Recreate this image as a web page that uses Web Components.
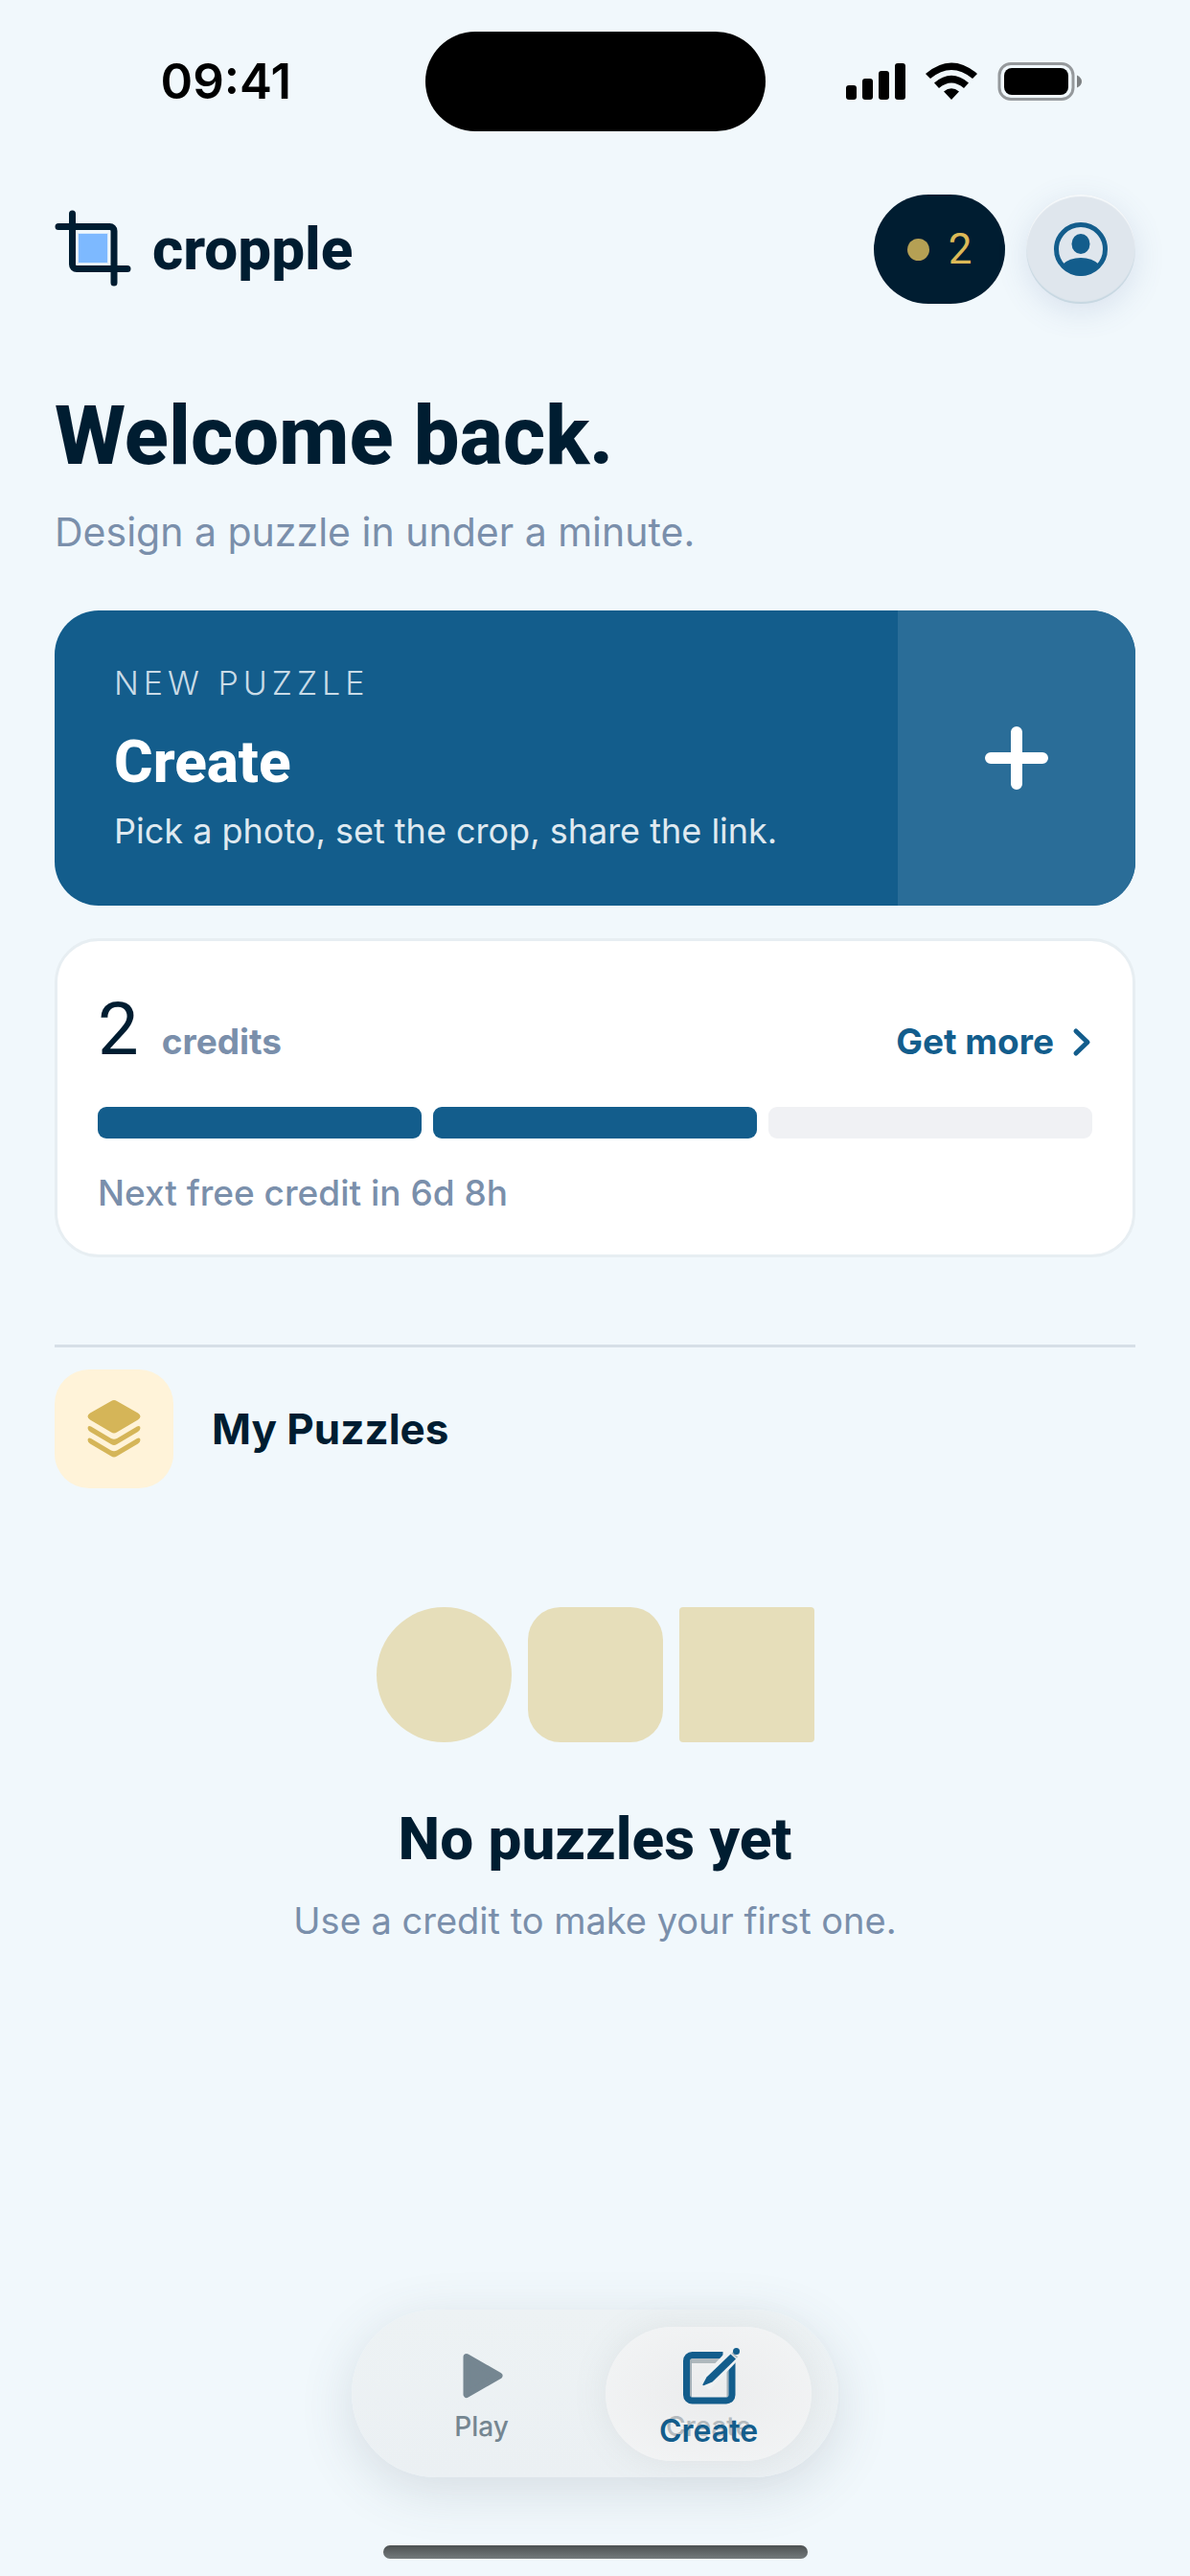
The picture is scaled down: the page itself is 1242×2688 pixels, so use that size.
<!DOCTYPE html>
<html lang="en">
<head>
<meta charset="utf-8">
<meta name="viewport" content="width=device-width, initial-scale=1">
<title>cropple</title>
<style>
  :root {
    --bg: #f1f8fc;
    --ink: #001d31;
    --blue: #135d8c;
    --muted: #7a8fab;
    --gold: #d5b558;
    --display: Roboto, "Liberation Sans", sans-serif;
    --text: Inter, "Liberation Sans", sans-serif;
  }

  body {
    margin: 0;
    background: var(--bg);
    color: var(--ink);
    font-family: var(--text);
  }
</style>
</head>
<body>
<home-screen></home-screen>

<script>
const define = (name, html) => {
  const template = document.createElement('template');
  template.innerHTML = html;
  customElements.define(name, class extends HTMLElement {
    constructor() {
      super();
      this.attachShadow({ mode: 'open' }).appendChild(template.content.cloneNode(true));
    }
  });
};

define('status-bar', `
  <style>
    :host {
      display: grid;
      grid-template-columns: 1fr 355px 1fr;
      align-items: center;
      padding-top: 33px;
    }
    time {
      justify-self: center;
      padding-left: 28px;
      font-size: 51px;
      font-weight: 600;
      line-height: 64px;
      color: #000;
    }
    .island {
      height: 104px;
      border-radius: 52px;
      background: #000;
    }
    svg {
      justify-self: center;
      margin-right: 28px;
    }
  </style>
  <time>09:41</time>
  <div class="island"></div>
  <svg width="248" height="40" viewBox="0 0 248 40" aria-hidden="true">
    <rect x="1" y="24" width="11" height="15" rx="3"/>
    <rect x="18" y="17" width="11" height="22" rx="3"/>
    <rect x="35" y="9" width="11" height="30" rx="3"/>
    <rect x="52" y="1" width="11" height="38" rx="3"/>
    <path d="M84 12Q111-11 138 12L133 17Q111-1 89 17Z"/>
    <path d="M93 21.500Q111 6 129 21.500L124 27Q111 16 98 27Z"/>
    <path d="M103 30.500Q111 24 119 30.500L111 39Z"/>
    <rect x="161" y="1.500" width="77" height="37" rx="12" fill="none" stroke="#95999c" stroke-width="3"/>
    <rect x="166" y="6" width="67" height="28" rx="8"/>
    <path d="M242 13.500Q247 16 247 20T242 26.500Z" fill="#7d8183"/>
  </svg>
`);

define('app-header', `
  <style>
    :host {
      display: flex;
      align-items: center;
      gap: 22px;
      height: 114px;
    }
    a {
      display: flex;
      align-items: center;
      gap: 20px;
      margin-right: auto;
      color: inherit;
      text-decoration: none;
      font: 800 62px/72px var(--display);
    }
    button {
      display: flex;
      align-items: center;
      justify-content: center;
      height: 114px;
      padding: 0;
      border: 0;
      border-radius: 57px;
    }
    .credits {
      gap: 20px;
      width: 137px;
      background: var(--ink);
      color: #dcb957;
      font: 400 44px/52px var(--display);
    }
    .credits i {
      width: 23px;
      height: 23px;
      border-radius: 50%;
      background: #b5a054;
    }
    .profile {
      width: 114px;
      background: #dfe6ed;
      color: var(--blue);
      box-shadow: inset 0 2px 1px #f6f9fb, inset 0 -2px 1px #c6d7e1, 0 8px 32px rgba(90, 110, 160, .16);
    }
  </style>
  <a href="#" aria-label="cropple">
    <svg width="82" height="82" viewBox="0 0 82 82" aria-hidden="true">
      <rect x="24.500" y="24.500" width="31" height="31" fill="#7db9ff" stroke="#d9ebfd"/>
      <path d="M18.500 4v53a4.500 4.500 0 0 0 4.500 4.500h53M4 17.500h53.500a4.500 4.500 0 0 1 4.500 4.500v54" fill="none" stroke="#001d31" stroke-width="7" stroke-linecap="round"/>
    </svg>
    <span>cropple</span>
  </a>
  <button class="credits"><i></i><span>2</span></button>
  <button class="profile" aria-label="Profile">
    <svg width="58" height="58" viewBox="0 0 58 58" aria-hidden="true">
      <circle cx="29" cy="29" r="25.500" fill="none" stroke="currentColor" stroke-width="5"/>
      <ellipse cx="29" cy="23.500" rx="9.500" ry="10.500" fill="currentColor"/>
      <path d="M10 45Q17 38 29 38T48 45Q41 57 29 57T10 45Z" fill="currentColor"/>
    </svg>
  </button>
`);

define('welcome-title', `
  <style>
    :host {
      display: block;
    }
    h1 {
      margin: 0 0 22px;
      font: 800 85px/100px var(--display);
    }
    p {
      margin: 0;
      font-size: 41px;
      line-height: 56px;
      color: var(--muted);
    }
  </style>
  <h1><slot></slot></h1>
  <p><slot name="hint"></slot></p>
`);

define('create-card', `
  <style>
    :host {
      display: block;
    }
    button {
      display: grid;
      grid-template-columns: 1fr 248px;
      width: 100%;
      padding: 0;
      border: 0;
      border-radius: 46px;
      overflow: hidden;
      background: var(--blue);
      color: #fff;
      font-family: inherit;
      text-align: left;
    }
    .copy {
      display: flex;
      flex-direction: column;
      padding: 54px 62px 56px;
    }
    small {
      font-size: 34px;
      font-weight: 300;
      line-height: 44px;
      letter-spacing: 5px;
      text-transform: uppercase;
      color: #c9dbe7;
    }
    b {
      margin: 24px 0 14px;
      font: 800 62px/72px var(--display);
    }
    .hint {
      font-size: 36px;
      line-height: 44px;
      color: #dfe9f0;
    }
    .plus {
      display: grid;
      place-items: center;
      background: #2a6d98;
    }
  </style>
  <button>
    <span class="copy">
      <small>New puzzle</small>
      <b>Create</b>
      <span class="hint">Pick a photo, set the crop, share the link.</span>
    </span>
    <span class="plus">
      <svg width="68" height="68" viewBox="0 0 68 68" aria-hidden="true">
        <path d="M34 7v54M7 34h54" stroke="#fff" stroke-width="12" stroke-linecap="round"/>
      </svg>
    </span>
  </button>
`);

define('credits-card', `
  <style>
    :host {
      display: block;
      padding: 48px 42px 42px;
      border: 3px solid #e7eef2;
      border-radius: 46px;
      background: #fff;
    }
    .row {
      display: flex;
      align-items: baseline;
      gap: 24px;
    }
    .count {
      font: 400 76px/88px var(--display);
    }
    .label {
      font-size: 37px;
      font-weight: 700;
      color: var(--muted);
    }
    a {
      display: flex;
      align-items: center;
      gap: 18px;
      margin-left: auto;
      font-size: 37px;
      font-weight: 700;
      line-height: 44px;
      color: var(--blue);
      text-decoration: none;
    }
    .meter {
      display: grid;
      grid-template-columns: repeat(3, 1fr);
      gap: 12px;
      margin: 37px 0 35px;
    }
    .meter i {
      height: 33px;
      border-radius: 9px;
      background: #f0f1f4;
    }
    .meter .on {
      background: var(--blue);
    }
    p {
      margin: 0;
      font-size: 37px;
      font-weight: 500;
      line-height: 44px;
      color: var(--muted);
    }
  </style>
  <div class="row">
    <span class="count">2</span>
    <span class="label">credits</span>
    <a href="#">Get more
      <svg width="22" height="32" viewBox="0 0 22 32" aria-hidden="true">
        <path d="M5 5l12 11.500L5 28" fill="none" stroke="currentColor" stroke-width="5" stroke-linecap="round" stroke-linejoin="round"/>
      </svg>
    </a>
  </div>
  <div class="meter"><i class="on"></i><i class="on"></i><i></i></div>
  <p>Next free credit in 6d 8h</p>
`);

define('section-title', `
  <style>
    :host {
      display: flex;
      align-items: center;
      gap: 40px;
      padding-top: 23px;
      border-top: 3px solid #d6dfe7;
    }
    .tile {
      display: grid;
      place-items: center;
      width: 124px;
      height: 124px;
      border-radius: 36px;
      background: #fff3d9;
    }
    h2 {
      margin: 0;
      font-size: 44px;
      font-weight: 700;
      line-height: 56px;
    }
  </style>
  <div class="tile">
    <svg width="56" height="62" viewBox="0 0 56 62" fill="#d5b558" aria-hidden="true">
      <path d="M25 2Q28 0 31 2L53 14.500Q58 18 53 21.500L31 34.500Q28 36.500 25 34.500L3 21.500Q-2 18 3 14.500Z"/>
      <path d="M1 28.500Q2 27.500 4 28.500L25 41Q28 42.500 31 41L52 28.500Q54 27.500 55 28.500Q56.500 31.500 53 34L31 47Q28 49 25 47L3 34Q-.500 31.500 1 28.500Z"/>
      <path d="M1 41Q2 40 4 41L25 53.500Q28 55 31 53.500L52 41Q54 40 55 41Q56.500 44 53 46.500L31 59.500Q28 61.500 25 59.500L3 46.500Q-.500 44 1 41Z"/>
    </svg>
  </div>
  <h2><slot></slot></h2>
`);

define('empty-state', `
  <style>
    :host {
      display: block;
      text-align: center;
    }
    .shapes {
      display: flex;
      justify-content: center;
      gap: 17px;
    }
    i {
      width: 141px;
      height: 141px;
      border-radius: 4px;
      background: #e6deba;
    }
    .circle {
      border-radius: 50%;
    }
    .soft {
      border-radius: 34px;
    }
    h3 {
      margin: 65px 0 25px;
      font: 800 62px/72px var(--display);
    }
    p {
      margin: 0;
      font-size: 38px;
      line-height: 48px;
      color: var(--muted);
    }
  </style>
  <div class="shapes"><i class="circle"></i><i class="soft"></i><i></i></div>
  <h3><slot></slot></h3>
  <p><slot name="hint"></slot></p>
`);

define('tab-bar', `
  <style>
    :host {
      display: flex;
      gap: 22px;
      padding: 18px 28px 17px;
      border-radius: 88px;
      background: linear-gradient(#edf2f4, #ebf0f3);
      box-shadow: 0 14px 56px rgba(70, 80, 95, .16);
    }
    button {
      position: relative;
      display: flex;
      flex-direction: column;
      align-items: center;
      gap: 4px;
      width: 215px;
      height: 140px;
      padding: 19px 0 0;
      border: 0;
      border-radius: 70px;
      background: none;
      font: 500 28px/34px var(--text);
      color: #758691;
    }
    .active {
      background: radial-gradient(#ebeced, #f3f5f6);
      box-shadow: 0 0 36px rgba(120, 130, 130, .12);
      color: var(--blue);
      font: 600 32px/44px var(--text);
    }
    /* label of the resting state, fading out under the active one */
    .ghost {
      position: absolute;
      top: 87px;
      font: 500 28px/34px var(--text);
      color: #b4babe;
    }
    .label {
      position: relative;
    }
  </style>
  <button>
    <svg width="64" height="64" viewBox="0 0 64 64" aria-hidden="true">
      <path d="M16 12.500l34 19.500-34 19.500z" fill="currentColor" stroke="currentColor" stroke-width="7" stroke-linejoin="round"/>
    </svg>
    <span>Play</span>
  </button>
  <button class="active">
    <svg width="64" height="64" viewBox="0 0 64 64" fill="none" aria-hidden="true">
      <path d="M12 16.500h34" stroke="#afb8bd" stroke-width="5"/>
      <path d="M13 16v38M51.500 24v30" stroke="#a3b0b8" stroke-width="2"/>
      <path d="M46.500 10.500H14.500a6 6 0 0 0-6 6V52a6 6 0 0 0 6 6H50a6 6 0 0 0 6-6V17" stroke="currentColor" stroke-width="7"/>
      <path d="M27 42L63 4" stroke="#eff1f2" stroke-width="15"/>
      <path d="M54.500 9.500L60 14.500 35.500 38.500 27 42Q25 42.500 25.500 41L29.500 33.500Z" fill="currentColor"/>
      <path d="M56 8L61.500 13" stroke="#b4bec4" stroke-width="2"/>
      <circle cx="60.500" cy="6.500" r="3.500" fill="currentColor"/>
    </svg>
    <span class="ghost" aria-hidden="true">Create</span>
    <span class="label">Create</span>
  </button>
`);

define('home-screen', `
  <style>
    :host {
      display: flex;
      flex-direction: column;
      box-sizing: border-box;
      min-height: 100vh;
      padding-bottom: 18px;
    }
    main {
      display: flex;
      flex-direction: column;
      padding: 66px 57px;
    }
    welcome-title {
      margin: 88px 0 54px;
    }
    credits-card {
      margin: 34px 0 91px;
    }
    empty-state {
      margin-top: 124px;
    }
    footer {
      display: flex;
      flex-direction: column;
      align-items: center;
      gap: 71px;
      margin-top: auto;
    }
    .home {
      width: 443px;
      height: 14px;
      border-radius: 7px;
      background: linear-gradient(#4c5152, #747a7c);
    }
  </style>
  <status-bar></status-bar>
  <main>
    <app-header></app-header>
    <welcome-title>Welcome back.<span slot="hint">Design a puzzle in under a minute.</span></welcome-title>
    <create-card></create-card>
    <credits-card></credits-card>
    <section-title>My Puzzles</section-title>
    <empty-state>No puzzles yet<span slot="hint">Use a credit to make your first one.</span></empty-state>
  </main>
  <footer>
    <tab-bar></tab-bar>
    <div class="home"></div>
  </footer>
`);
</script>
</body>
</html>
